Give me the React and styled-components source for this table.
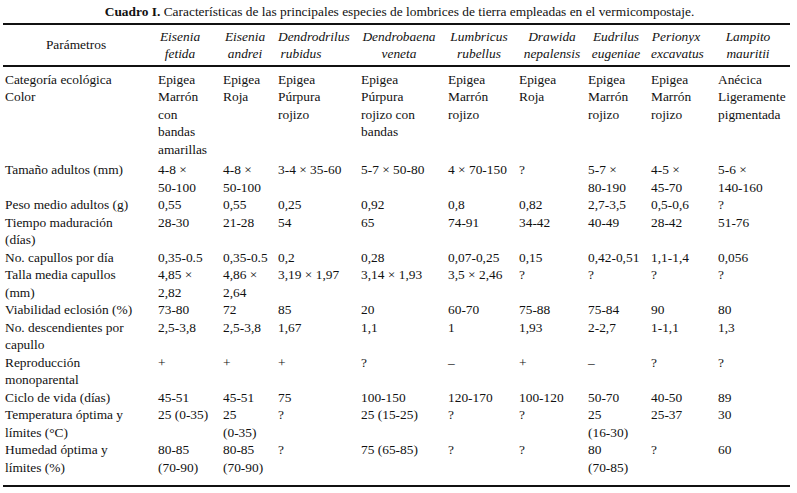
import React from 'react';
import styled, { createGlobalStyle } from 'styled-components';

const GlobalStyle = createGlobalStyle`
  html, body {
    margin: 0;
    padding: 0;
    background: #fff;
  }
  body {
    font-family: "Liberation Serif", "Times New Roman", serif;
    color: #111;
  }
`;

// column widths, measured off the reference
const widths = [153, 65, 55, 83, 87, 71, 69, 63, 67, 74];

const species = [
    { name: ['Eisenia', 'fetida'], pr: 19 },
    { name: ['Eisenia', 'andrei'], pr: 9 },
    { name: ['Dendrodrilus', 'rubidus'], pr: 35 },
    { name: ['Dendrobaena', 'veneta'], pr: 9 },
    { name: ['Lumbricus', 'rubellus'], pr: 7 },
    { name: ['Drawida', 'nepalensis'], pr: 1 },
    { name: ['Eudrilus', 'eugeniae'], pr: 5 },
    { name: ['Perionyx', 'excavatus'], pr: 15 },
    { name: ['Lampito', 'mauritii'], pr: 12 },
];

const rows = [
    {
        label: ['Categoría ecológica', 'Color'],
        pb: 3,
        cells: [
            ['Epigea', 'Marrón', 'con', 'bandas', 'amarillas'],
            ['Epigea', 'Roja'],
            ['Epigea', 'Púrpura', 'rojizo'],
            ['Epigea', 'Púrpura', 'rojizo con', 'bandas'],
            ['Epigea', 'Marrón', 'rojizo'],
            ['Epigea', 'Roja'],
            ['Epigea', 'Marrón', 'rojizo'],
            ['Epigea', 'Marrón', 'rojizo'],
            ['Anécica', 'Ligeramente', 'pigmentada'],
        ],
    },
    {
        label: ['Tamaño adultos (mm)'],
        cells: [['4-8 ×', '50-100'], ['4-8 ×', '50-100'], '3-4 × 35-60', '5-7 × 50-80', '4 × 70-150', '?', ['5-7 ×', '80-190'], ['4-5 ×', '45-70'], ['5-6 ×', '140-160']],
    },
    {
        label: ['Peso medio adultos (g)'],
        cells: ['0,55', '0,55', '0,25', '0,92', '0,8', '0,82', '2,7-3,5', '0,5-0,6', '?'],
    },
    {
        label: ['Tiempo maduración', '(días)'],
        cells: ['28-30', '21-28', '54', '65', '74-91', '34-42', '40-49', '28-42', '51-76'],
    },
    {
        label: ['No. capullos por día'],
        cells: ['0,35-0.5', '0,35-0.5', '0,2', '0,28', '0,07-0,25', '0,15', '0,42-0,51', '1,1-1,4', '0,056'],
    },
    {
        label: ['Talla media capullos', '(mm)'],
        cells: [['4,85 ×', '2,82'], ['4,86 ×', '2,64'], '3,19 × 1,97', '3,14 × 1,93', '3,5 × 2,46', '?', '?', '?', '?'],
    },
    {
        label: ['Viabilidad eclosión (%)'],
        cells: ['73-80', '72', '85', '20', '60-70', '75-88', '75-84', '90', '80'],
    },
    {
        label: ['No. descendientes por', 'capullo'],
        cells: ['2,5-3,8', '2,5-3,8', '1,67', '1,1', '1', '1,93', '2-2,7', '1-1,1', '1,3'],
    },
    {
        label: ['Reproducción', 'monoparental'],
        cells: ['+', '+', '+', '?', '–', '+', '–', '?', '?'],
    },
    {
        label: ['Ciclo de vida (días)'],
        cells: ['45-51', '45-51', '75', '100-150', '120-170', '100-120', '50-70', '40-50', '89'],
    },
    {
        label: ['Temperatura óptima y', 'límites (°C)'],
        cells: ['25 (0-35)', ['25', '(0-35)'], '?', '25 (15-25)', '?', '?', ['25', '(16-30)'], '25-37', '30'],
    },
    {
        label: ['Humedad óptima y', 'límites (%)'],
        pb: 9,
        cells: [['80-85', '(70-90)'], ['80-85', '(70-90)'], '?', '75 (65-85)', '?', '?', ['80', '(70-85)'], '?', '60'],
    },
];

const Lines = ({ value }) => {
    const list = Array.isArray(value) ? value : [value];
    return list.map((line, i) => <Line key={i}>{line}</Line>);
};

const App = () => {
    return (<Page>
        <GlobalStyle />
        <Title><b>Cuadro I.</b> Características de las principales especies de lombrices de tierra empleadas en el vermicompostaje.</Title>
        <Table>
            <colgroup>
                {widths.map((w, i) => <col key={i} style={{ width: w }} />)}
            </colgroup>
            <thead>
                <tr>
                    <HeadCell $pr={9}><Lines value="Parámetros" /></HeadCell>
                    {species.map(s => (
                        <HeadCell key={s.name[0]} $pr={s.pr} $italic>
                            <Lines value={s.name} />
                        </HeadCell>
                    ))}
                </tr>
            </thead>
            <tbody>
                {rows.map((row, r) => (
                    <tr key={r}>
                        <Cell $first={r === 0} $pb={row.pb}><Lines value={row.label} /></Cell>
                        {row.cells.map((c, i) => (
                            <Cell key={i} $first={r === 0} $pb={row.pb}><Lines value={c} /></Cell>
                        ))}
                    </tr>
                ))}
            </tbody>
        </Table>
    </Page>);
}

export default App;

const Page = styled.div`
    width: 797px;
    height: 493px;
    padding-top: 3px;
    box-sizing: border-box;
    font-size: 13.4px;
    line-height: 17.5px;
`

const Title = styled.div`
    text-align: center;
    white-space: nowrap;
    padding-left: 2px;

    b {
        font-weight: bold;
    }
`

const Table = styled.table`
    table-layout: fixed;
    border-collapse: collapse;
    width: 787px;
    margin: 2px 0 0 3px;
    border-top: 2px solid #111;
    border-bottom: 2px solid #111;
`

const HeadCell = styled.th`
    font-weight: normal;
    font-style: ${props => props.$italic ? 'italic' : 'normal'};
    text-align: center;
    vertical-align: middle;
    padding: 3px ${props => props.$pr}px 2px 2px;
    border-bottom: 2px solid #111;
`

const Cell = styled.td`
    vertical-align: top;
    text-align: left;
    padding: ${props => props.$first ? 4 : 0}px 0 ${props => props.$pb || 0}px 2px;
`

const Line = styled.div`
    white-space: nowrap;
`
